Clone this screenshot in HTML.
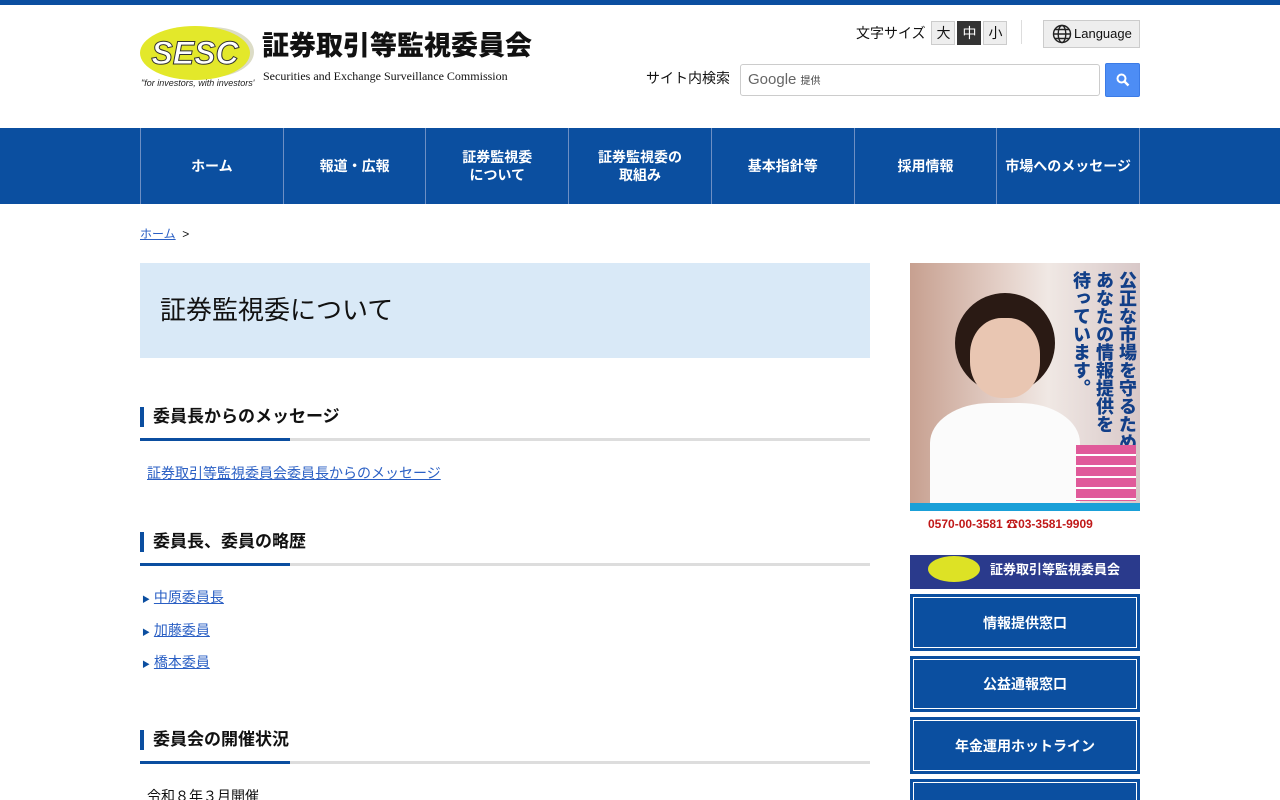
<!DOCTYPE html>
<html><head><meta charset="utf-8"><style>
*{margin:0;padding:0;box-sizing:border-box}
html,body{width:1280px;height:800px;overflow:hidden}
body{background:#fff;font-family:"Liberation Sans","Noto Sans CJK JP",sans-serif;color:#111;position:relative}
.top{position:absolute;left:0;top:0;width:1280px;height:5px;background:#0b4ea0}
.abs{position:absolute}
.navbg{position:absolute;left:0;top:128px;width:1280px;height:76px;background:#0b4fa0}
.nav{position:absolute;left:140px;top:128px;width:1000px;height:76px;display:flex}
.nav div{flex:1;border-left:1px solid #6d8fc4;color:#fff;font-weight:bold;font-size:14px;display:flex;align-items:center;justify-content:center;text-align:center;line-height:18px}
.nav div:last-child{border-right:1px solid #6d8fc4}
a{color:#2a5fc4;text-decoration:underline}
.h2{position:absolute;left:140px;width:730px;height:34px;border-bottom:3px solid #ddd}
.h2:after{content:"";position:absolute;left:0;bottom:-3px;width:150px;height:3px;background:#0b4ea0}
.h2 span{position:absolute;left:0;top:0;height:20px;border-left:4px solid #0b4ea0;padding-left:9px;font-size:17px;font-weight:bold;line-height:20px}
.btn{position:absolute;left:910px;width:230px;background:#0b4fa0;border:2px solid #0b4fa0;color:#fff;font-weight:bold;font-size:14px;display:flex;align-items:center;justify-content:center}
.btn:before{content:"";position:absolute;inset:1px;border:1px solid #fff}
.fs{display:inline-block;width:24px;height:24px;border:1px solid #ccc;background:#eee;text-align:center;line-height:22px;font-size:14px;margin-left:2px}
.li{position:absolute;left:142px;font-size:14px;line-height:18px}
</style></head><body>
<div class="top"></div>
<svg class="abs" style="left:140px;top:24px" width="115" height="66">
<ellipse cx="72" cy="28" rx="42" ry="25" fill="#dcdcc6"/>
<ellipse cx="55" cy="29" rx="55" ry="27" fill="#e3e82a"/>
<text x="55" y="40" font-family="Liberation Sans" font-size="32" font-weight="bold" font-style="italic" fill="#fff" stroke="#333" stroke-width="1" text-anchor="middle">SESC</text>
<text x="1" y="62" font-family="Liberation Sans" font-size="9" font-style="italic" fill="#222">"for investors, with investors"</text>
</svg>
<div class="abs" style="left:262px;top:30px;font-size:27px;font-weight:900;line-height:32px">証券取引等監視委員会</div>
<div class="abs" style="left:263px;top:69px;font-family:'Liberation Serif',serif;font-size:12px">Securities and Exchange Surveillance Commission</div>
<div class="abs" style="left:856px;top:21px;font-size:14px;line-height:22px">文字サイズ <span class="fs">大</span><span class="fs" style="background:#333;color:#fff;border-color:#333">中</span><span class="fs">小</span></div>
<div class="abs" style="left:1021px;top:20px;width:1px;height:24px;background:#ddd"></div>
<div class="abs" style="left:1043px;top:20px;width:97px;height:28px;border:1px solid #ccc;background:#eee;font-size:13px;line-height:26px;padding-left:30px">Language
<svg class="abs" style="left:8px;top:3px" width="20" height="20" viewBox="0 0 20 20" fill="none" stroke="#222" stroke-width="1.4"><circle cx="10" cy="10" r="8.5"/><ellipse cx="10" cy="10" rx="3.8" ry="8.5"/><path d="M1.5 10h17M3 5.5h14M3 14.5h14"/></svg></div>
<div class="abs" style="left:646px;top:68px;font-size:14px">サイト内検索</div>
<div class="abs" style="left:740px;top:64px;width:360px;height:32px;border:1px solid #ccc;border-radius:3px;padding-left:7px;line-height:30px;font-size:15px;color:#666">Google <span style="font-size:10px;color:#444">提供</span></div>
<div class="abs" style="left:1105px;top:63px;width:35px;height:34px;background:#4d8df5;border-radius:2px;border:1px solid #3b7be6">
<svg class="abs" style="left:10px;top:9px" width="14" height="14" viewBox="0 0 14 14"><circle cx="5.5" cy="5.5" r="4" fill="none" stroke="#fff" stroke-width="2"/><path d="M8.5 8.5l4 4" stroke="#fff" stroke-width="2.4"/></svg></div>
<div class="navbg"></div>
<div class="nav"><div>ホーム</div><div>報道・広報</div><div>証券監視委<br>について</div><div>証券監視委の<br>取組み</div><div>基本指針等</div><div>採用情報</div><div>市場へのメッセージ</div></div>
<div class="abs" style="left:140px;top:225px;font-size:12px"><a>ホーム</a>&nbsp;&nbsp;&gt;</div>
<div class="abs" style="left:140px;top:263px;width:730px;height:95px;background:#d9e9f7;padding-left:20px;line-height:95px;font-size:26px">証券監視委について</div>
<div class="h2" style="top:407px"><span>委員長からのメッセージ</span></div>
<div class="abs" style="left:147px;top:463px;font-size:14px"><a>証券取引等監視委員会委員長からのメッセージ</a></div>
<div class="h2" style="top:532px"><span>委員長、委員の略歴</span></div>
<div class="li" style="top:588px"><span style="font-size:8px;color:#0b4ea0">▶</span> <a>中原委員長</a></div>
<div class="li" style="top:621px"><span style="font-size:8px;color:#0b4ea0">▶</span> <a>加藤委員</a></div>
<div class="li" style="top:653px"><span style="font-size:8px;color:#0b4ea0">▶</span> <a>橋本委員</a></div>
<div class="h2" style="top:730px"><span>委員会の開催状況</span></div>
<div class="abs" style="left:147px;top:786px;font-size:14px">令和８年３月開催</div>
<div class="abs" style="left:910px;top:263px;width:230px;height:326px;background:linear-gradient(90deg,#c7a090,#e4d0c8 40%,#f0e8e4 60%,#d8c8c8);overflow:hidden">
<div class="abs" style="left:45px;top:30px;width:100px;height:100px;border-radius:50%;background:#2a1a14"></div>
<div class="abs" style="left:60px;top:55px;width:70px;height:80px;border-radius:45%;background:#e9c6b2"></div>
<div class="abs" style="left:20px;top:140px;width:150px;height:100px;border-radius:40% 40% 0 0;background:#fbfbfb"></div>
<div class="abs" style="left:156px;top:8px;width:72px;height:180px;color:#123f88;font-weight:900;font-size:18px;writing-mode:vertical-rl;line-height:23px;white-space:nowrap">公正な市場を守るため、<br>あなたの情報提供を<br>待っています。</div>
<div class="abs" style="left:166px;top:182px;width:60px;height:56px;background:repeating-linear-gradient(#e05a9a 0 9px,#fff 9px 11px)"></div>
<div class="abs" style="left:0;top:240px;width:230px;height:52px;background:#fff;border-top:8px solid #1aa0d8"></div>
<div class="abs" style="left:18px;top:252px;font-size:12px;font-weight:900;color:#c01818">0570-00-3581 ☎03-3581-9909</div>
<div class="abs" style="left:0;top:292px;width:230px;height:34px;background:#2a3a8c"></div>
<div class="abs" style="left:18px;top:293px;width:52px;height:26px;border-radius:50%;background:#dde225"></div>
<div class="abs" style="left:80px;top:296px;font-size:13px;font-weight:bold;color:#fff">証券取引等監視委員会</div>
</div>
<div class="btn" style="top:594px;height:57px">情報提供窓口</div>
<div class="btn" style="top:656px;height:56px">公益通報窓口</div>
<div class="btn" style="top:717px;height:57px">年金運用ホットライン</div>
<div class="btn" style="top:779px;height:57px"></div>
</body></html>
